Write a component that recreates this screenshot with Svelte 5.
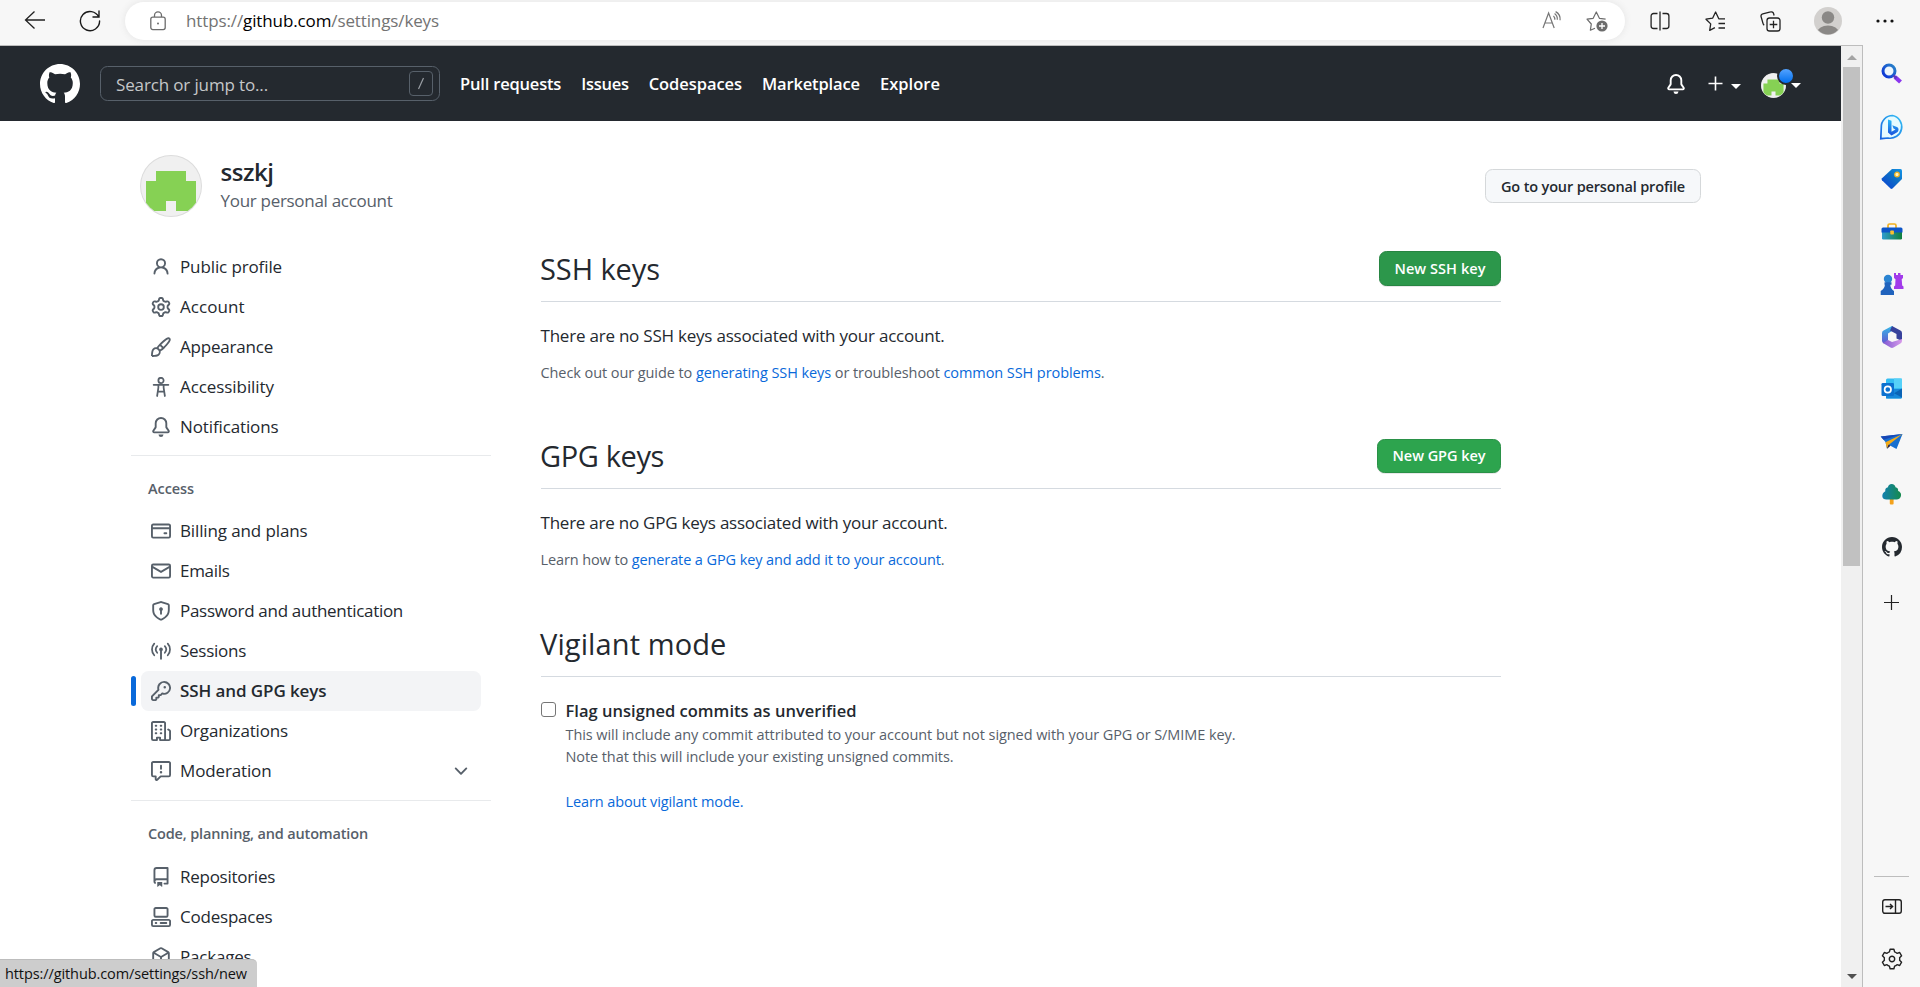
<script>
  const mark = 'M8 0C3.58 0 0 3.58 0 8c0 3.54 2.29 6.53 5.47 7.59.4.07.55-.17.55-.38 0-.19-.01-.82-.01-1.49-2.01.37-2.53-.49-2.69-.94-.09-.23-.48-.94-.82-1.13-.28-.15-.68-.52-.01-.53.63-.01 1.08.58 1.23.82.72 1.21 1.87.87 2.33.66.07-.52.28-.87.51-1.07-1.78-.2-3.64-.89-3.64-3.95 0-.87.31-1.59.82-2.15-.08-.2-.36-1.02.08-2.12 0 0 .67-.21 2.2.82.64-.18 1.32-.27 2-.27.68 0 1.36.09 2 .27 1.53-1.04 2.2-.82 2.2-.82.44 1.1.16 1.92.08 2.12.51.56.82 1.27.82 2.15 0 3.07-1.87 3.75-3.65 3.95.29.25.54.73.54 1.48 0 1.07-.01 1.93-.01 2.2 0 .21.15.46.55.38A8.013 8.013 0 0016 8c0-4.42-3.58-8-8-8z';
  const bell = 'M8 16a2 2 0 001.985-1.75c.017-.137-.097-.25-.235-.25h-3.5c-.138 0-.252.113-.235.25A2 2 0 008 16zM8 1.5A3.5 3.5 0 004.5 5v2.947c0 .346-.102.683-.294.97l-1.703 2.556a.018.018 0 00-.003.01l.001.006c0 .002.002.004.004.006a.017.017 0 00.006.004l.007.001h10.964l.007-.001a.016.016 0 00.006-.004.016.016 0 00.004-.006l.001-.007a.017.017 0 00-.003-.01l-1.703-2.554a1.75 1.75 0 01-.294-.97V5A3.5 3.5 0 008 1.5zM3 5a5 5 0 0110 0v2.947c0 .05.015.098.042.139l1.703 2.555A1.518 1.518 0 0113.482 13H2.518a1.518 1.518 0 01-1.263-2.36l1.703-2.554A.25.25 0 003 7.947V5z';
  const gear = 'M7.429 1.525a6.593 6.593 0 011.142 0c.036.003.108.036.137.146l.289 1.105c.147.56.55.967.997 1.189.174.086.341.183.501.29.417.278.97.423 1.53.27l1.102-.303c.11-.03.175.016.195.046.219.31.41.641.573.989.014.031.022.11-.059.19l-.815.806c-.411.406-.562.957-.53 1.456a4.588 4.588 0 010 .582c-.032.499.119 1.05.53 1.456l.815.806c.08.08.073.159.059.19a6.494 6.494 0 01-.573.99c-.02.029-.086.074-.195.045l-1.103-.303c-.559-.153-1.112-.008-1.529.27-.16.107-.327.204-.5.29-.449.222-.851.628-.998 1.189l-.289 1.105c-.029.11-.101.143-.137.146a6.613 6.613 0 01-1.142 0c-.036-.003-.108-.037-.137-.146l-.289-1.105c-.147-.56-.55-.967-.997-1.189a4.502 4.502 0 01-.501-.29c-.417-.278-.97-.423-1.53-.27l-1.102.303c-.11.03-.175-.016-.195-.046a6.492 6.492 0 01-.573-.989c-.014-.031-.022-.11.059-.19l.815-.806c.411-.406.562-.957.53-1.456a4.587 4.587 0 010-.582c.032-.499-.119-1.05-.53-1.456l-.815-.806c-.08-.08-.073-.159-.059-.19a6.44 6.44 0 01.573-.99c.02-.029.086-.075.195-.045l1.103.303c.559.153 1.112.008 1.529-.27.16-.107.327-.204.5-.29.449-.222.851-.628.998-1.189l.289-1.105c.029-.11.101-.143.137-.146zM8 0c-.236 0-.47.01-.701.03-.743.065-1.29.615-1.458 1.261l-.29 1.106c-.017.066-.078.158-.211.224a5.994 5.994 0 00-.668.386c-.123.082-.233.09-.3.071L3.27 2.776c-.644-.177-1.392.02-1.82.63a7.977 7.977 0 00-.704 1.217c-.315.675-.111 1.422.363 1.891l.815.806c.05.048.098.147.088.294a6.084 6.084 0 000 .772c.01.147-.038.246-.088.294l-.815.806c-.474.469-.678 1.216-.363 1.891.2.428.436.835.704 1.218.428.609 1.176.806 1.82.63l1.103-.303c.066-.019.176-.011.299.071.213.143.436.272.668.386.133.066.194.158.212.224l.289 1.106c.169.646.715 1.196 1.458 1.26a8.094 8.094 0 001.402 0c.743-.064 1.29-.614 1.458-1.26l.29-1.106c.017-.066.078-.158.211-.224a5.98 5.98 0 00.668-.386c.123-.082.233-.09.3-.071l1.102.302c.644.177 1.392-.02 1.82-.63.268-.382.505-.789.704-1.217.315-.675.111-1.422-.364-1.891l-.814-.806c-.05-.048-.098-.147-.088-.294a6.1 6.1 0 000-.772c-.01-.147.039-.246.088-.294l.814-.806c.475-.469.679-1.216.364-1.891a7.992 7.992 0 00-.704-1.218c-.428-.609-1.176-.806-1.82-.63l-1.103.303c-.066.019-.176.011-.299-.071a5.991 5.991 0 00-.668-.386c-.133-.066-.194-.158-.212-.224L10.16 1.29C9.99.645 9.444.095 8.701.031A8.094 8.094 0 008 0zm1.5 8a1.5 1.5 0 11-3 0 1.5 1.5 0 013 0zM11 8a3 3 0 11-6 0 3 3 0 016 0z';
  const chevron = 'M12.78 6.22a.75.75 0 010 1.06l-4.25 4.25a.75.75 0 01-1.06 0L3.22 7.28a.75.75 0 011.06-1.06L8 9.94l3.72-3.72a.75.75 0 011.06 0z';

  const nav = [
    ['Pull requests', 101.2],
    ['Issues', 47.5],
    ['Codespaces', 93.2],
    ['Marketplace', 98],
    ['Explore', 60]
  ];

  // label, text width, filled icon path, stroked icon path
  const groups = [
    {
      title: null,
      items: [
        ['Public profile', 102, 'M10.5 5a2.5 2.5 0 11-5 0 2.5 2.5 0 015 0zm.061 3.073a4 4 0 10-5.123 0 6.004 6.004 0 00-3.431 5.142.75.75 0 001.498.07 4.5 4.5 0 018.99 0 .75.75 0 101.498-.07 6.005 6.005 0 00-3.432-5.142z'],
        ['Account', 64.5, gear],
        ['Appearance', 93, 'M11.134 1.535C9.722 2.562 8.16 4.057 6.889 5.312 5.8 6.387 5.041 7.401 4.575 8.294a3.745 3.745 0 00-3.227 1.054c-.43.431-.69 1.066-.86 1.657a11.982 11.982 0 00-.358 1.914A21.263 21.263 0 000 15.203v.054l.75-.007-.007.75h.054a14.404 14.404 0 00.654-.012 21.243 21.243 0 001.63-.118c.62-.07 1.3-.18 1.914-.357.592-.17 1.226-.43 1.657-.861a3.745 3.745 0 001.055-3.217c.908-.461 1.942-1.216 3.04-2.3 1.279-1.262 2.764-2.825 3.775-4.249.501-.706.923-1.428 1.125-2.096.2-.659.235-1.469-.368-2.07-.606-.607-1.42-.55-2.069-.34-.66.213-1.376.646-2.076 1.155zm-3.95 8.48a3.76 3.76 0 00-1.19-1.192 9.758 9.758 0 011.161-1.607l1.658 1.658a9.853 9.853 0 01-1.63 1.142zM12.016 2.749c-1.224.89-2.605 2.189-3.822 3.384l1.718 1.718c1.21-1.205 2.51-2.597 3.387-3.833.47-.662.78-1.227.912-1.662.134-.444.032-.551.009-.575h-.001V1.78c-.014-.014-.112-.113-.548.027-.432.14-.995.462-1.655.942zM1.62 13.089a19.56 19.56 0 00-.104 1.395 19.55 19.55 0 001.396-.104 10.528 10.528 0 001.668-.309c.526-.151.856-.325 1.011-.48a2.25 2.25 0 00-3.182-3.182c-.155.155-.329.485-.48 1.01a10.515 10.515 0 00-.309 1.67z'],
        ['Accessibility', 94, '', 'M10.1 2.75a2.1 2.1 0 11-4.2 0 2.1 2.1 0 014.2 0zM2.1 6.25h11.8M5.9 6.4v2.2L4.9 15.2M10.1 6.4v2.2l1 6.6M5.6 11.6h4.8'],
        ['Notifications', 98.5, bell]
      ]
    },
    {
      title: ['Access', 46],
      items: [
        ['Billing and plans', 127.5, 'M10.75 9a.75.75 0 000 1.5h1.5a.75.75 0 000-1.5h-1.5zM0 3.75C0 2.784.784 2 1.75 2h12.5c.966 0 1.75.784 1.75 1.75v8.5A1.75 1.75 0 0114.25 14H1.75A1.75 1.75 0 010 12.25v-8.5zm14.5 0V5h-13V3.75a.25.25 0 01.25-.25h12.5a.25.25 0 01.25.25zm0 2.75h-13v5.75c0 .138.112.25.25.25h12.5a.25.25 0 00.25-.25V6.5z'],
        ['Emails', 49.5, 'M1.75 2A1.75 1.75 0 000 3.75v.736a.75.75 0 000 .027v7.737C0 13.216.784 14 1.75 14h12.5A1.75 1.75 0 0016 12.25v-8.5A1.75 1.75 0 0014.25 2H1.75zM14.5 4.07v-.32a.25.25 0 00-.25-.25H1.75a.25.25 0 00-.25.25v.32L8 7.88l6.5-3.81zm-13 1.74v6.441c0 .138.112.25.25.25h12.5a.25.25 0 00.25-.25V5.809L8.38 9.397a.75.75 0 01-.76 0L1.5 5.809z'],
        ['Password and authentication', 223, 'M8.533.133a1.75 1.75 0 00-1.066 0l-5.25 1.68A1.75 1.75 0 001 3.48V7c0 1.566.32 3.182 1.303 4.682.983 1.498 2.585 2.813 5.032 3.855a1.7 1.7 0 001.33 0c2.447-1.042 4.049-2.357 5.032-3.855C14.68 10.182 15 8.566 15 7V3.48a1.75 1.75 0 00-1.217-1.667L8.533.133zm-.61 1.429a.25.25 0 01.153 0l5.25 1.68a.25.25 0 01.174.238V7c0 1.358-.275 2.666-1.057 3.86-.784 1.194-2.121 2.34-4.366 3.297a.2.2 0 01-.154 0c-2.245-.956-3.582-2.104-4.366-3.298C2.775 9.666 2.5 8.36 2.5 7V3.48a.25.25 0 01.174-.237l5.25-1.68zM9.5 6.5a1.5 1.5 0 01-.75 1.3v2.45a.75.75 0 01-1.5 0V7.8A1.5 1.5 0 119.5 6.5z'],
        ['Sessions', 66, 'M9.5 6.75a1.5 1.5 0 01-.75 1.3v6.2a.75.75 0 01-1.5 0v-6.2a1.5 1.5 0 112.25-1.3z', 'M2.6 2.1a6.9 6.9 0 000 9.3M13.4 2.1a6.9 6.9 0 010 9.3M4.95 4.1a4 4 0 000 5.3M11.05 4.1a4 4 0 010 5.3'],
        ['SSH and GPG keys', 146.5, 'M6.5 5.5a4 4 0 112.731 3.795.75.75 0 00-.768.18L7.44 10.5H6.25a.75.75 0 00-.75.75v1.19l-.06.06H4.25a.75.75 0 00-.75.75v1.19l-.06.06H1.75a.25.25 0 01-.25-.25v-1.69l5.024-5.023a.75.75 0 00.181-.768A3.995 3.995 0 016.5 5.5zm4-5.5a5.5 5.5 0 00-5.348 6.788L.22 11.72a.75.75 0 00-.22.53v2C0 15.216.784 16 1.75 16h2a.75.75 0 00.53-.22l.5-.5a.75.75 0 00.22-.53V14h.75a.75.75 0 00.53-.22l.5-.5a.75.75 0 00.22-.53V12h.75a.75.75 0 00.53-.22l.932-.932A5.5 5.5 0 1010.5 0zm.5 6a1 1 0 100-2 1 1 0 000 2z'],
        ['Organizations', 108, 'M1.5 14.25c0 .138.112.25.25.25H4v-1.25a.75.75 0 01.75-.75h2.5a.75.75 0 01.75.75v1.25h2.25a.25.25 0 00.25-.25V1.75a.25.25 0 00-.25-.25h-8.5a.25.25 0 00-.25.25v12.5zM1.75 16A1.75 1.75 0 010 14.25V1.75C0 .784.784 0 1.75 0h8.5C11.216 0 12 .784 12 1.75v12.5c0 .085-.006.168-.018.25h2.268a.25.25 0 00.25-.25V8.285a.25.25 0 00-.111-.208l-1.055-.703a.75.75 0 11.832-1.248l1.055.703c.487.325.779.871.779 1.456v5.965A1.75 1.75 0 0114.25 16h-3.5a.75.75 0 01-.197-.026c-.099.017-.2.026-.303.026h-3a.75.75 0 01-.75-.75V14h-1v1.25a.75.75 0 01-.75.75h-3zM3 3.75A.75.75 0 013.75 3h.5a.75.75 0 010 1.5h-.5A.75.75 0 013 3.75zM3.75 6a.75.75 0 000 1.5h.5a.75.75 0 000-1.5h-.5zM3 9.75A.75.75 0 013.75 9h.5a.75.75 0 010 1.5h-.5A.75.75 0 013 9.75zM7.75 9a.75.75 0 000 1.5h.5a.75.75 0 000-1.5h-.5zM7 6.75A.75.75 0 017.75 6h.5a.75.75 0 010 1.5h-.5A.75.75 0 017 6.75zM7.75 3a.75.75 0 000 1.5h.5a.75.75 0 000-1.5h-.5z'],
        ['Moderation', 91.5, 'M1.75 1.5a.25.25 0 00-.25.25v9.5c0 .138.112.25.25.25h2a.75.75 0 01.75.75v2.19l2.72-2.72a.75.75 0 01.53-.22h6.5a.25.25 0 00.25-.25v-9.5a.25.25 0 00-.25-.25H1.75zM0 1.75C0 .784.784 0 1.75 0h12.5C15.216 0 16 .784 16 1.75v9.5A1.75 1.75 0 0114.25 13H8.06l-2.573 2.573A1.457 1.457 0 013 14.543V13H1.75A1.75 1.75 0 010 11.25v-9.5zM9 9a1 1 0 11-2 0 1 1 0 012 0zm-.25-5.25a.75.75 0 00-1.5 0v2.5a.75.75 0 001.5 0v-2.5z']
      ]
    },
    {
      title: ['Code, planning, and automation', 220],
      items: [
        ['Repositories', 95, 'M2 2.5A2.5 2.5 0 014.5 0h8.75a.75.75 0 01.75.75v12.5a.75.75 0 01-.75.75h-2.5a.75.75 0 110-1.5h1.75v-2h-8a1 1 0 00-.714 1.7.75.75 0 01-1.072 1.05A2.495 2.495 0 012 11.5v-9zm10.5-1V9h-8c-.356 0-.694.074-1 .208V2.5a1 1 0 011-1h8zM5 12.25v3.25a.25.25 0 00.4.2l1.45-1.087a.25.25 0 01.3 0L8.6 15.7a.25.25 0 00.4-.2v-3.25a.25.25 0 00-.25-.25h-3.5a.25.25 0 00-.25.25z'],
        ['Codespaces', 92.5, 'M2 1.75C2 .784 2.784 0 3.75 0h8.5C13.216 0 14 .784 14 1.75v5A1.75 1.75 0 0112.25 8.5h-8.5A1.75 1.75 0 012 6.75v-5zm1.75-.25a.25.25 0 00-.25.25v5c0 .138.112.25.25.25h8.5a.25.25 0 00.25-.25v-5a.25.25 0 00-.25-.25h-8.5zM0 11.25c0-.966.784-1.75 1.75-1.75h12.5c.966 0 1.75.784 1.75 1.75v3A1.75 1.75 0 0114.25 16H1.75A1.75 1.75 0 010 14.25v-3zM1.75 11a.25.25 0 00-.25.25v3c0 .138.112.25.25.25h12.5a.25.25 0 00.25-.25v-3a.25.25 0 00-.25-.25H1.75zM3 12.75a.75.75 0 01.75-.75h.5a.75.75 0 010 1.5h-.5a.75.75 0 01-.75-.75zm4 0a.75.75 0 01.75-.75h4.5a.75.75 0 010 1.5h-4.5a.75.75 0 01-.75-.75z'],
        ['Packages', 71.5, 'M8.878.392a1.75 1.75 0 00-1.756 0l-5.25 3.045A1.75 1.75 0 001 4.951v6.098c0 .624.332 1.2.872 1.514l5.25 3.045a1.75 1.75 0 001.756 0l5.25-3.045c.54-.313.872-.89.872-1.514V4.951c0-.624-.332-1.2-.872-1.514L8.878.392zM7.875 1.69a.25.25 0 01.25 0l4.63 2.685L8 7.133 3.245 4.375l4.63-2.685zM2.5 5.677v5.372c0 .09.047.171.125.216l4.625 2.683V8.432L2.5 5.677zm6.25 8.271l4.625-2.683a.25.25 0 00.125-.216V5.677L8.75 8.432v5.516z']
      ]
    }
  ];

  // Tracks the text so that it takes up the given width.
  function fit(node, width) {
    const natural = node.getBoundingClientRect().width;
    node.style.letterSpacing = `${(width - natural) / node.textContent.length}px`;
  }
</script>

{#snippet octicon(fill, stroke, size)}
  <svg width={size} height={size} viewBox="0 0 16 16" fill="currentColor" fill-rule="evenodd">
    {#if fill}<path d={fill} />{/if}
    {#if stroke}<path d={stroke} fill="none" stroke="currentColor" stroke-width="1.4" stroke-linecap="round" />{/if}
  </svg>
{/snippet}

{#snippet identicon(size)}
  <svg width={size} height={size} viewBox="0 0 62 62">
    <circle cx="31" cy="31" r="31" fill="#dcdcdc" />
    <circle cx="31" cy="31" r="30" fill="#f0f0f0" />
    <clipPath id="avatar{size}"><circle cx="31" cy="31" r="30" /></clipPath>
    <path clip-path="url(#avatar{size})" fill="#86d154" d="M16 16h30v10h10v30H36V46H26v10H6V26h10z" />
  </svg>
{/snippet}

<div class="browser">
  <div class="toolbar">
    <svg class="back" width="22" height="20" viewBox="0 0 22 20" fill="none" stroke="#222" stroke-width="1.3"><path d="M21 10H1.5M10.5 1.5L1.5 10l9 8.5" /></svg>
    <svg class="reload" width="22" height="22" viewBox="0 0 22 22" fill="none" stroke="#1a1a1a" stroke-width="1.4" stroke-linecap="round"><path d="M19.7 7A9.6 9.6 0 1 0 20.6 11M20 1v6h-6" /></svg>
    <div class="address">
      <svg class="lock" width="16" height="20" viewBox="0 0 16 20" fill="none" stroke="#6c6c6c" stroke-width="1.3"><rect x=".8" y="6.2" width="14.4" height="12.4" rx="2" /><path d="M4.5 6V4.4a3.5 3.5 0 0 1 7 0V6" /><circle cx="8" cy="12.4" r="1" fill="#6c6c6c" stroke="none" /></svg>
      <span class="url" use:fit={253}>https://<b>github.com</b>/settings/keys</span>
      <svg class="read" width="20" height="18" viewBox="0 0 20 18" fill="none" stroke="#767676" stroke-width="1.2"><path d="M1 17L6.6 2l5.6 15M3 12h7.3M11.5 4.800a5 5 0 0 1 1.300 4M12.600 2.600a7 7 0 0 1 2.700 6.200M13.600.600c3.300 1.700 4.800 4.700 4.500 8.600" /></svg>
      <svg class="fav" width="22" height="22" viewBox="0 0 22 22" fill="none" stroke="#6c6c6c" stroke-width="1.2" stroke-linejoin="round"><path d="M9 18.2l-4.6 2 .9-6.2L1 9.2l6.2-.9L10.3 2l3.1 6.3 6.2.9" /><circle cx="16" cy="16" r="5.6" fill="#6c6c6c" stroke="none" /><path d="M13 16h6M16 13v6" stroke="#fff" stroke-width="1.3" /></svg>
    </div>
    <div class="tools">
      <svg width="20" height="20" viewBox="0 0 20 20" fill="none" stroke="#222" stroke-width="1.3"><path d="M7.5 2.5H3.6a2.5 2.5 0 0 0-2.5 2.5v10a2.5 2.5 0 0 0 2.5 2.5h3.9M12.5 2.5h3.9a2.5 2.5 0 0 1 2.5 2.5v10a2.5 2.5 0 0 1-2.5 2.5h-3.9M10 .5v19" /></svg>
      <svg width="21" height="20" viewBox="0 0 21 20" fill="none" stroke="#222" stroke-width="1.3" stroke-linejoin="round"><path d="M20 7.8h-6.2L10.6 1 7.6 7.2 1 8.2l4.7 4.7-1 6.5 5.2-2.7M13.5 12.5H20M13.5 17H20" /></svg>
      <svg width="21" height="21" viewBox="0 0 21 21" fill="none" stroke="#222" stroke-width="1.3"><rect x="7" y="7" width="13" height="13" rx="2.6" /><path d="M13.5 9.7v7.6M9.7 13.5h7.6M4.2 14.2A3 3 0 0 1 3 12.4L1.1 5.8a2.4 2.4 0 0 1 1.7-3L10.6.9a2.4 2.4 0 0 1 3 1.7L14.1 4.5" /></svg>
      <svg width="28" height="28" viewBox="0 0 28 28"><clipPath id="user"><circle cx="14" cy="14" r="13.4" /></clipPath><circle cx="14" cy="14" r="14" fill="#d2d0ce" /><g fill="#8a8886" clip-path="url(#user)"><circle cx="14" cy="10.5" r="6.2" /><ellipse cx="14" cy="25" rx="10.5" ry="6.5" /></g></svg>
      <svg width="18" height="4" viewBox="0 0 18 4" fill="#111"><circle cx="2" cy="2" r="1.6" /><circle cx="9" cy="2" r="1.6" /><circle cx="16" cy="2" r="1.6" /></svg>
    </div>
  </div>

  <div class="body">
    <div class="view">
      <div class="page">
        <header>
          <span class="mark">{@render octicon(mark, '', 40)}</span>
          <div class="search"><span use:fit={152}>Search or jump to...</span><svg width="24" height="25" viewBox="0 0 24 25" fill="none" stroke="#57606a"><rect x=".5" y=".5" width="23" height="24" rx="3.5" /><path d="M14.5 7L9.5 18" stroke="#9a9fa5" stroke-width="1.2" /></svg></div>
          <nav>{#each nav as [label, width]}<a href="#top" use:fit={width}>{label}</a>{/each}</nav>
          <div class="actions">
            {@render octicon(bell, '', 20)}
            <svg class="plus" width="15" height="15" viewBox="0 0 15 15" stroke="#fff" stroke-width="1.6"><path d="M7.5 .5v14M.5 7.5h14" /></svg>
            <i class="caret"></i>
            <span class="me">{@render identicon(25)}<i class="dot"></i></span>
            <i class="caret"></i>
          </div>
        </header>

        <div class="account">
          {@render identicon(62)}
          <div class="who"><strong><span use:fit={53}>sszkj</span></strong><span use:fit={172}>Your personal account</span></div>
          <button class="btn profile"><span use:fit={184}>Go to your personal profile</span></button>
        </div>

        <div class="columns">
          <aside>
            {#each groups as group}
              <section>
                {#if group.title}<h3><span use:fit={group.title[1]}>{group.title[0]}</span></h3>{/if}
                <ul>
                  {#each group.items as [label, width, fill, stroke]}
                    <li class:active={label === 'SSH and GPG keys'}>
                      {@render octicon(fill, stroke, 20)}
                      <span use:fit={width}>{label}</span>
                      {#if label === 'Moderation'}<em>{@render octicon(chevron, '', 20)}</em>{/if}
                    </li>
                  {/each}
                </ul>
              </section>
            {/each}
          </aside>

          <main>
            <section>
              <div class="head"><h2 use:fit={120}>SSH keys</h2><button class="btn green hover"><span use:fit={91}>New SSH key</span></button></div>
              <p><span use:fit={404}>There are no SSH keys associated with your account.</span></p>
              <p class="note"><span use:fit={564}>Check out our guide to <a href="#ssh">generating SSH keys</a> or troubleshoot <a href="#ssh">common SSH problems</a>.</span></p>
            </section>
            <section class="gpg">
              <div class="head"><h2 use:fit={124}>GPG keys</h2><button class="btn green"><span use:fit={93}>New GPG key</span></button></div>
              <p><span use:fit={407}>There are no GPG keys associated with your account.</span></p>
              <p class="note"><span use:fit={404}>Learn how to <a href="#gpg">generate a GPG key and add it to your account</a>.</span></p>
            </section>
            <section>
              <div class="head"><h2 use:fit={186.5}>Vigilant mode</h2></div>
              <div class="option">
                <i class="box"></i>
                <div>
                  <strong><span use:fit={291}>Flag unsigned commits as unverified</span></strong>
                  <small><span use:fit={670}>This will include any commit attributed to your account but not signed with your GPG or S/MIME key.</span></small>
                  <small><span use:fit={388}>Note that this will include your existing unsigned commits.</span></small>
                  <small class="learn"><a href="#vigilant"><span use:fit={178}>Learn about vigilant mode.</span></a></small>
                </div>
              </div>
            </section>
          </main>
        </div>
      </div>
      <div class="scrollbar"><i class="up"></i><i class="thumb"></i><i class="down"></i></div>
    </div>

    <div class="edge">
      <div class="apps">
        <span><svg width="24" height="24" viewBox="0 0 24 24"><defs><linearGradient id="lens" x1="0" y1="1" x2="1" y2="0"><stop offset="0" stop-color="#0b2fd8" /><stop offset="1" stop-color="#2b86c8" /></linearGradient></defs><path d="M15 15l5.5 5" stroke="#8a35ee" stroke-width="4.2" stroke-linecap="butt" /><circle cx="9" cy="9" r="6" fill="#eef7fd" stroke="url(#lens)" stroke-width="3" /><path d="M13.5 13.5l3 2.7" stroke="#5b3bc0" stroke-width="2.5" /></svg></span>
        <span><svg width="26" height="26" viewBox="0 0 26 26"><defs><linearGradient id="bing" x1="1" y1="0" x2="0" y2="1"><stop offset="0" stop-color="#35c1f5" /><stop offset="1" stop-color="#1461df" /></linearGradient><linearGradient id="bing2" x1="0" y1="0" x2="0" y2="1"><stop offset="0" stop-color="#28bdf7" /><stop offset="1" stop-color="#1a4fdc" /></linearGradient></defs><path d="M13.5 1.5A11.3 11.3 0 1 1 9 24l-7.200.7.5-11.5A11.3 11.3 0 0 1 13.5 1.5z" fill="#e6fbff" stroke="url(#bing)" stroke-width="1.7" /><path d="M9 5.5l3.5 1.2v11l4-2.2-2-.9-1.2-3.3 4.7 1.8c2 .8 2 4 .2 5.2l-5.7 3.2L9 18.5z" fill="url(#bing2)" /></svg></span>
        <span><svg width="24" height="24" viewBox="0 0 24 24"><defs><linearGradient id="tag" x1="0" y1="1" x2="1" y2="0"><stop offset="0" stop-color="#0b3fd6" /><stop offset=".6" stop-color="#0d70c4" /><stop offset="1" stop-color="#1595e8" /></linearGradient></defs><path d="M12 2h8.500a1.5 1.5 0 0 1 1.5 1.5V12l-9.500 9.500a1.5 1.5 0 0 1-2 0L2 13.300a1.5 1.5 0 0 1 0-2z" fill="url(#tag)" /><circle cx="17" cy="7.5" r="2.3" fill="#fff3c0" stroke="#f0b221" stroke-width="1.3" /></svg></span>
        <span><svg width="24" height="20" viewBox="0 0 24 20"><defs><linearGradient id="case" x1="0" y1="0" x2="1" y2="0"><stop offset="0" stop-color="#2e9bd0" /><stop offset="1" stop-color="#10803c" /></linearGradient></defs><path d="M8 6V3.500A1.5 1.5 0 0 1 9.500 2h5A1.5 1.5 0 0 1 16 3.500V6" fill="none" stroke="#f2b01e" stroke-width="1.7" /><rect x="2" y="8" width="20" height="9.5" rx="1.2" fill="url(#case)" /><path d="M3 5.500h18a1.5 1.5 0 0 1 1.500 1.500v3.500h-21V7A1.5 1.5 0 0 1 3 5.500z" fill="#0c55c8" /><rect x="10.3" y="8.5" width="3.6" height="4" rx=".7" fill="#f9c02e" /></svg></span>
        <span><svg width="24" height="24" viewBox="0 0 24 24"><path d="M14 1h2v2h2V1h2.500v2H23V1v5l-1.300 1.300.5 6.200 1.300 1v2.500H14v-2.500l1.200-1 .3-6.200L14 6z" fill="#a23bea" /><circle cx="8" cy="7" r="4.2" fill="#2b84d2" /><path d="M4.500 10.200h7v2.500h-1.200c.2 3 1.200 4.500 3.700 6.300v4H.7v-4c2.700-1.800 4-3.300 4.200-6.300H4.500z" fill="#2063bd" /></svg></span>
        <span><svg width="24" height="24" viewBox="0 0 24 24"><defs><linearGradient id="m1" x1="0" y1="0" x2="0" y2="1"><stop offset="0" stop-color="#35b8e8" /><stop offset="1" stop-color="#6257d0" /></linearGradient><linearGradient id="m2" x1="0" y1="0" x2="1" y2="0"><stop offset="0" stop-color="#8159d2" /><stop offset="1" stop-color="#d79bea" /></linearGradient></defs><path d="M12 1L4 5.200A3 3 0 0 0 2 8v8a3 3 0 0 0 2 2.600l4-3V8.500L15 4z" fill="url(#m1)" /><path d="M12 1l8 4.200A3 3 0 0 1 22 8v8l-5.500-2.500V9L10 5.500z" fill="#37419b" /><path d="M22 14v2a3 3 0 0 1-1.600 2.600L13.500 22.500a3 3 0 0 1-3 0L3 18l5-3 4 2z" fill="url(#m2)" /></svg></span>
        <span><svg width="24" height="24" viewBox="0 0 24 24"><rect x="6" y="1.5" width="16" height="20" rx="1.5" fill="#33bdf2" /><path d="M14 1.500h8V11h-8z" fill="#56d1f8" /><path d="M6 12h16v8a1.5 1.5 0 0 1-1.500 1.500H6z" fill="#1687d9" /><path d="M22 11.500v9l-8-4.300z" fill="#0a63b5" /><rect x="1.5" y="6" width="12.5" height="13" rx="1.3" fill="#0b70cf" /><circle cx="7.8" cy="12.5" r="3.2" fill="none" stroke="#fff" stroke-width="1.7" /></svg></span>
        <span><svg width="24" height="20" viewBox="0 0 24 20"><path d="M.7 4.500L22.500 2 16.500 17 10 13.500 7 16.800 5.500 10z" fill="#176fd0" /><path d="M5.500 10.200L22.500 2 8.500 13 7 16.800z" fill="#f3aa16" /><path d="M7 16.800l1.500-4 2 1z" fill="#36233a" /><path d="M.7 4.500L22.500 2 3.500 7.700z" fill="#1747b5" /></svg></span>
        <span><svg width="22" height="24" viewBox="0 0 22 24"><defs><linearGradient id="tree" x1="0" y1="0" x2="1" y2="0"><stop offset="0" stop-color="#1380b0" /><stop offset="1" stop-color="#158a4c" /></linearGradient></defs><rect x="8.8" y="16.5" width="3.8" height="6" rx="1" fill="#f4a21c" /><path d="M10.700 2c2 0 3.600 1.500 3.800 3.300 2 .3 3 2 2.600 3.800 2.200.7 3.600 3.100 2.700 5.400-.6 2-2.100 3-4.100 3H5.500c-2.500 0-4-1.200-4.200-3.300-.1-2.200 1-4 3-5C3.900 7.300 5 5.600 7 5.300 7 3.500 8.600 2 10.700 2z" fill="url(#tree)" /></svg></span>
        <span class="gh">{@render octicon(mark, '', 20)}</span>
        <span class="add"><svg width="15" height="15" viewBox="0 0 15 15" stroke="#222" stroke-width="1.2"><path d="M7.500 0v15M0 7.500h15" /></svg></span>
      </div>
      <div class="foot">
        <span><svg width="20" height="15" viewBox="0 0 20 15" fill="none" stroke="#222" stroke-width="1.4"><rect x=".7" y=".7" width="18.6" height="13.6" rx="2.2" /><path d="M13.500 1v13M3.500 7.500h7M8 5l2.600 2.500L8 10" /></svg></span>
        <span class="cog"><svg width="22" height="22" viewBox="-11 -11 22 22" fill="none" stroke="#222" stroke-width="1.4" stroke-linejoin="round"><path d="M-1.900-9.800h3.800l.7 2.700a7.500 7.500 0 0 1 2.400 1.400l2.700-.8 1.900 3.300-2 1.900a7.500 7.500 0 0 1 0 2.600l2 1.900-1.900 3.300-2.700-.8a7.500 7.500 0 0 1-2.400 1.400l-.7 2.700h-3.800l-.7-2.700a7.500 7.500 0 0 1-2.400-1.400l-2.700.8-1.900-3.300 2-1.900a7.500 7.500 0 0 1 0-2.600l-2-1.900 1.900-3.300 2.700.8a7.500 7.500 0 0 1 2.400-1.400z" /><circle r="2.7" /></svg></span>
      </div>
    </div>
  </div>
  <div class="status"><span use:fit={242}>https://github.com/settings/ssh/new</span></div>
</div>

<style>
  :global(body) { overflow: hidden; }
  * { box-sizing: border-box; }
  svg { display: block; flex: none; }
  h2, h3, p, ul { margin: 0; padding: 0; font-weight: 400; }
  a { color: #0969da; text-decoration: none; }
  span, h2, a { white-space: nowrap; }
  i { display: block; flex: none; }

  .browser { position: relative; width: 1920px; height: 987px; overflow: hidden; display: flex; flex-direction: column; background: #f7f7f7; color: #24292f; font: 17px/26px "Open Sans", "Noto Sans", sans-serif; }
  .toolbar { height: 45px; display: flex; align-items: flex-start; flex: none; background: #f7f7f7; }
  .back { margin: 10px 0 0 24px; }
  .reload { margin: 10px 0 0 33px; }
  .address { display: flex; align-items: flex-start; width: 1500px; height: 38px; margin: 2px 0 0 24px; border-radius: 19px; background: #fff; box-shadow: 0 0 6px 1px #e8e8e8; }
  .lock { margin: 9px 0 0 25px; }
  .url { margin: 6px 0 0 20px; color: #737373; }
  .url b { color: #000; font-weight: 400; }
  .read { margin: 9px 0 0 auto; }
  .fav { margin: 8px 17px 0 24px; }
  .tools { display: flex; align-items: center; height: 42px; padding-left: 25px; }
  .tools svg + svg { margin-left: 34.5px; }
  .tools svg:nth-child(4) { margin-left: 33px; }
  .tools svg:nth-child(5) { margin-left: 34px; }

  .body { flex: 1; display: flex; min-height: 0; }
  .view { width: 1863px; display: flex; border-top: 1px solid #bdbdbd; border-right: 1px solid #bdbdbd; background: #fff; overflow: hidden; }
  .page { width: 1841px; }
  header { height: 75px; display: flex; align-items: center; padding-left: 40px; background: #24292f; }
  .mark { color: #fff; }
  .search { width: 340px; height: 35px; margin-left: 20px; padding: 0 6px 0 15px; display: flex; align-items: center; justify-content: space-between; border: 1px solid #57606a; border-radius: 7.5px; color: #c5c7c9; }
  .search span { padding-top: 2px; }
  nav { display: flex; gap: 20px; margin-left: 20px; }
  nav a { color: #fff; font-weight: 600; font-size: 16.5px; }
  .actions { margin-left: auto; display: flex; align-items: center; color: #fff; padding-right: 40px; }
  .plus { margin-left: 22px; }
  .caret { border: 5px solid transparent; border-top-color: #fff; border-bottom: 0; margin: 5px 0 0 8px; }
  .me { position: relative; margin: 3px 0 0 20px; }
  .me + .caret { margin-left: 5px; margin-top: 3px; }
  .dot { position: absolute; left: 16px; top: -6px; width: 18px; height: 18px; border: 2px solid #24292f; border-radius: 50%; background: linear-gradient(#54a3ff, #006eed); }

  .account { display: flex; align-items: center; width: 1561px; height: 62px; margin: 34px 0 0 140px; }
  .who { margin-left: 18.5px; display: flex; flex-direction: column; align-items: flex-start; color: #57606a; line-height: 28px; }
  .who strong { font-size: 24px; line-height: 30px; font-weight: 600; color: #24292f; }
  .btn { display: flex; align-items: center; justify-content: center; height: 34px; padding: 0; border: 1px solid #d5d8da; border-radius: 7.5px; font: 600 14.5px/20px "Open Sans", sans-serif; }
  .profile { width: 216px; margin-left: auto; padding-top: 1px; background: #f6f8fa; color: #24292f; }

  .columns { display: flex; gap: 50px; margin: 30px 0 0 131px; }
  aside { width: 360px; flex: none; }
  aside section + section { border-top: 1px solid #e8eaec; margin-top: 8px; }
  aside section + section + section { margin-top: 9px; }
  h3 { height: 55px; padding: 19px 0 0 17px; font-size: 14.5px; line-height: 27px; font-weight: 600; color: #57606a; }
  section + section + section h3 { height: 56px; }
  ul { list-style: none; }
  li { position: relative; display: flex; align-items: center; height: 40px; width: 340px; margin-left: 10px; padding-left: 10px; gap: 9px; border-radius: 7.5px; color: #57606a; }
  li > span { color: #24292f; }
  li em { margin: -2px 10px 0 auto; }
  .active { background: #f3f4f6; font-weight: 600; }
  .active::before { content: ''; position: absolute; left: -10px; top: 5px; width: 5px; height: 30px; border-radius: 5px; background: #0969da; }

  main { width: 960px; padding-top: 4px; }
  main section { height: 187px; }
  main .gpg { height: 188px; }
  .head { display: flex; justify-content: space-between; align-items: flex-start; height: 51px; border-bottom: 1px solid #d5dae0; }
  h2 { margin-left: -1px; font-size: 29px; line-height: 35px; }
  .green { width: 124px; margin-top: 1px; color: #fff; background: #2da44e; border-color: #2a9147; box-shadow: 0 1px 0 rgba(27, 31, 36, .1); }
  .hover { width: 122px; height: 35px; margin-top: 0; background: #2c974b; border-color: #278542; }
  p { margin: 21px 0 0 -.5px; }
  .note { margin-top: 12px; font-size: 14.5px; line-height: 24px; color: #57606a; }
  .option { display: flex; gap: 9.5px; padding-top: 21px; }
  .box { width: 15px; height: 15px; margin-top: 4px; border: 1px solid #767676; border-radius: 3px; background: #fff; }
  .option strong, small { display: block; }
  .option strong { font-size: 16.5px; font-weight: 600; }
  small { font-size: 14.5px; line-height: 22px; color: #57606a; }
  .learn { margin-top: 23px; }

  .scrollbar { display: flex; flex-direction: column; align-items: center; width: 21px; background: #f0f0f0; }
  .up { border: 5px solid transparent; border-bottom-color: #a3a3a3; border-top: 0; margin-top: 9px; }
  .thumb { width: 17px; height: 499px; margin-top: 7px; background: #c1c1c1; }
  .down { border: 5px solid transparent; border-top-color: #505050; border-bottom: 0; margin: auto 0 8px; }

  .edge { width: 57px; display: flex; flex-direction: column; justify-content: space-between; }
  .edge span { display: flex; align-items: center; justify-content: center; height: 52.5px; }
  .apps { padding-top: 3px; }
  .gh { color: #24292f; }
  .edge .add { height: 59px; }
  .foot { width: 35px; margin: 0 auto; border-top: 1px solid #bdbdbd; padding: 3px 0 2px; }

  .status { position: absolute; left: 0; bottom: 0; width: 257px; height: 28px; padding: 0 0 0 5px; border-top: 1px solid #bdbdbd; border-radius: 0 5px 0 0; background: #cdcdcd; color: #111; font-size: 14.5px; line-height: 27px; }
</style>
